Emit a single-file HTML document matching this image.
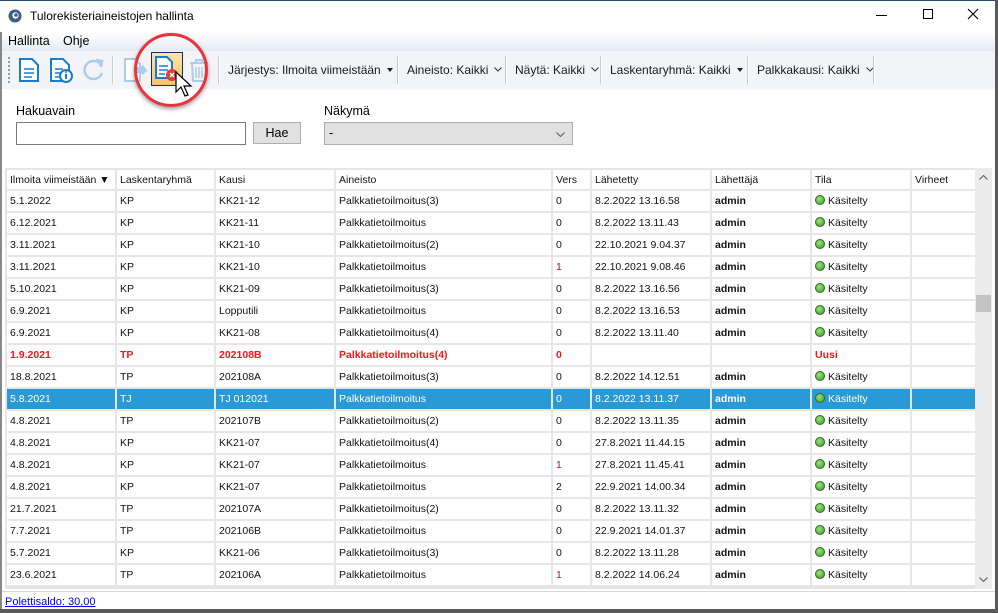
<!DOCTYPE html>
<html><head><meta charset="utf-8"><style>
*{box-sizing:border-box;margin:0;padding:0}
body{width:998px;height:613px;overflow:hidden;background:#fff;font-family:"Liberation Sans",Arial,sans-serif;position:relative}
.abs{position:absolute}
.title{left:0;top:0;width:998px;height:32px;background:#fff;border-top:1px solid #2a4a6a}
.menu{left:0;top:32px;width:995px;height:19px;background:linear-gradient(#fff,#e6eaf3);font-size:12.5px}
.tb{left:0;top:51px;width:995px;height:38px;background:#f3f4f7}
.tbt{font-size:12px;color:#1a1a1a;top:63px;white-space:nowrap}
.sep{width:2px;height:28px;top:56px;background:#c9c9c9;border-right:1px solid #fff}
.chev{display:inline-block;width:8px;height:5px;margin-left:6px;vertical-align:2px}
.tri{display:inline-block;margin-left:6px;width:0;height:0;border-left:3.5px solid transparent;border-right:3.5px solid transparent;border-top:4px solid #222;vertical-align:2px}
table{border-collapse:collapse;font-size:10.5px;position:absolute;left:5px;top:168px;table-layout:fixed;width:970px}
td{height:22px;border:2px solid #e6e6e6;padding:0 3px;white-space:nowrap;overflow:hidden;color:#111}
tr.h td{height:21px;background:#fff}
td.b{font-weight:bold}
tr.red td{color:#f01818;font-weight:bold}
tr.sel td{background:#2a9ad6;color:#fff;border-color:#e6e6e6}
.dot{display:inline-block;width:10px;height:10px;border-radius:50%;background:radial-gradient(circle at 40% 35%,#9be07a,#3a9a20);border:1px solid #2d6e1a;vertical-align:-1px;margin-right:3px}
.v1{color:#a01070}
</style></head><body>
<div class="abs title"></div>
<svg class="abs" style="left:8px;top:9px" width="14" height="14" viewBox="0 0 14 14"><circle cx="7" cy="7" r="6.5" fill="#3b5e86"/><circle cx="7.5" cy="6.5" r="3.2" fill="#fff"/><circle cx="8" cy="6" r="1.8" fill="#3b5e86"/></svg>
<div class="abs" style="left:30px;top:9px;font-size:12px;color:#000">Tulorekisteriaineistojen hallinta</div>
<div class="abs" style="left:876px;top:15px;width:11px;height:1px;background:#000"></div>
<div class="abs" style="left:923px;top:9px;width:10px;height:10px;border:1px solid #000"></div>
<svg class="abs" style="left:967px;top:8px" width="12" height="12"><path d="M1 1L11 11M11 1L1 11" stroke="#000" stroke-width="1.1"/></svg>
<div class="abs menu"><span class="abs" style="left:8px;top:2px">Hallinta</span><span class="abs" style="left:63px;top:2px">Ohje</span></div>
<div class="abs tb"></div>
<div class="abs" style="left:8px;top:57px;width:2px;height:26px;border-left:2px dotted #999"></div>
<svg class="abs" style="left:17px;top:57px" width="24" height="26" viewBox="0 0 24 26"><path d="M3 2h12l6 6v16H3z" fill="#fff" stroke="#1a7bd0" stroke-width="2"/><path d="M7 12h10M7 16h10M7 20h8" stroke="#1a7bd0" stroke-width="1.6"/></svg>
<svg class="abs" style="left:48px;top:57px" width="26" height="26" viewBox="0 0 26 26"><path d="M3 2h12l6 6v16H3z" fill="#fff" stroke="#1a7bd0" stroke-width="2"/><path d="M7 12h8M7 16h6M7 20h5" stroke="#1a7bd0" stroke-width="1.6"/><circle cx="18" cy="19" r="6" fill="#fff" stroke="#1a7bd0" stroke-width="2"/><path d="M18 17v5" stroke="#1a7bd0" stroke-width="2"/><circle cx="18" cy="15" r="1" fill="#1a7bd0"/></svg>
<svg class="abs" style="left:80px;top:57px" width="26" height="26" viewBox="0 0 26 26"><path d="M21 8A9 9 0 1 0 22 16" fill="none" stroke="#a9cdea" stroke-width="2.5"/><path d="M16 3l6 1-1 6" fill="none" stroke="#a9cdea" stroke-width="2.5"/></svg>
<div class="abs sep" style="left:112px"></div>
<svg class="abs" style="left:122px;top:57px" width="28" height="26" viewBox="0 0 28 26"><path d="M3 2h10l5 5v17H3z" fill="#fff" stroke="#a9cdea" stroke-width="2"/><path d="M15 13h8l-3-4M23 13l-3 4" stroke="#a9cdea" stroke-width="3" fill="none"/><rect x="14" y="10" width="7" height="6" fill="#a9cdea"/></svg>
<div class="abs" style="left:151px;top:52px;width:32px;height:34px;background:linear-gradient(#fde4a8,#f6c46a);border:1px solid #1c2a6c"></div>
<svg class="abs" style="left:153px;top:55px" width="28" height="28" viewBox="0 0 28 28"><path d="M3 2h11l5 5v16H3z" fill="#fff" stroke="#1a7bd0" stroke-width="2"/><path d="M6 11h9M6 15h9M6 19h6" stroke="#1a7bd0" stroke-width="1.6"/><circle cx="19" cy="20" r="6" fill="#d94040"/><path d="M17 18l4 4M21 18l-4 4" stroke="#fff" stroke-width="1.5"/></svg>
<svg class="abs" style="left:187px;top:57px" width="24" height="26" viewBox="0 0 24 26"><path d="M3 6h18M9 6V3h6v3M5 6l1 18h12l1-18" fill="none" stroke="#a9cdea" stroke-width="2"/><path d="M9 10v11M12 10v11M15 10v11" stroke="#a9cdea" stroke-width="1.5"/></svg>
<svg class="abs" style="left:174px;top:70px" width="20" height="30" viewBox="0 0 20 30"><path d="M2 2v20l5-5 4 9 3-1-4-9h7z" fill="#fff" stroke="#000" stroke-width="1.2"/></svg>
<div class="abs" style="left:134px;top:33px;width:74px;height:74px;border:3px solid #e8343a;border-radius:50%;box-shadow:0 2px 4px rgba(0,0,0,.4)"></div>
<div class="abs sep" style="left:218px"></div>
<div class="abs tbt" style="left:228px">Järjestys: Ilmoita viimeistään<span class="tri"></span></div>
<div class="abs sep" style="left:397px"></div>
<div class="abs tbt" style="left:407px">Aineisto: Kaikki<svg class="chev" viewBox="0 0 8 5"><path d="M0.5 0.5L4 4L7.5 0.5" fill="none" stroke="#333"/></svg></div>
<div class="abs sep" style="left:505px"></div>
<div class="abs tbt" style="left:515px">Näytä: Kaikki<svg class="chev" viewBox="0 0 8 5"><path d="M0.5 0.5L4 4L7.5 0.5" fill="none" stroke="#333"/></svg></div>
<div class="abs sep" style="left:600px"></div>
<div class="abs tbt" style="left:610px">Laskentaryhmä: Kaikki<span class="tri"></span></div>
<div class="abs sep" style="left:747px"></div>
<div class="abs tbt" style="left:757px">Palkkakausi: Kaikki<svg class="chev" viewBox="0 0 8 5"><path d="M0.5 0.5L4 4L7.5 0.5" fill="none" stroke="#333"/></svg></div>
<div class="abs sep" style="left:873px"></div>
<div class="abs" style="left:16px;top:104px;font-size:12.5px">Hakuavain</div>
<div class="abs" style="left:324px;top:104px;font-size:12.5px">Näkymä</div>
<div class="abs" style="left:16px;top:122px;width:230px;height:23px;border:1px solid #7a7a7a;background:#fff"></div>
<div class="abs" style="left:253px;top:122px;width:48px;height:22px;border:1px solid #adadad;background:#e1e1e1;font-size:12.5px;text-align:center;line-height:20px">Hae</div>
<div class="abs" style="left:324px;top:122px;width:249px;height:23px;border:1px solid #adadad;background:#e1e1e1;font-size:12.5px;padding-left:4px;line-height:21px">-<svg class="abs" style="right:7px;top:9px" width="9" height="5" viewBox="0 0 9 5"><path d="M0.5 0.5L4.5 4.5L8.5 0.5" fill="none" stroke="#555"/></svg></div>
<table>
<colgroup><col style="width:110px"><col style="width:99px"><col style="width:120px"><col style="width:217px"><col style="width:39px"><col style="width:120px"><col style="width:100px"><col style="width:100px"><col style="width:65px"></colgroup>
<tr class="h"><td>Ilmoita viimeistään ▼</td><td>Laskentaryhmä</td><td>Kausi</td><td>Aineisto</td><td>Vers</td><td>Lähetetty</td><td>Lähettäjä</td><td>Tila</td><td>Virheet</td></tr>
<tr><td>5.1.2022</td><td>KP</td><td>KK21-12</td><td>Palkkatietoilmoitus(3)</td><td>0</td><td>8.2.2022 13.16.58</td><td class="b">admin</td><td><span class="dot"></span>Käsitelty</td><td></td></tr>
<tr><td>6.12.2021</td><td>KP</td><td>KK21-11</td><td>Palkkatietoilmoitus</td><td>0</td><td>8.2.2022 13.11.43</td><td class="b">admin</td><td><span class="dot"></span>Käsitelty</td><td></td></tr>
<tr><td>3.11.2021</td><td>KP</td><td>KK21-10</td><td>Palkkatietoilmoitus(2)</td><td>0</td><td>22.10.2021 9.04.37</td><td class="b">admin</td><td><span class="dot"></span>Käsitelty</td><td></td></tr>
<tr><td>3.11.2021</td><td>KP</td><td>KK21-10</td><td>Palkkatietoilmoitus</td><td class="v1">1</td><td>22.10.2021 9.08.46</td><td class="b">admin</td><td><span class="dot"></span>Käsitelty</td><td></td></tr>
<tr><td>5.10.2021</td><td>KP</td><td>KK21-09</td><td>Palkkatietoilmoitus(3)</td><td>0</td><td>8.2.2022 13.16.56</td><td class="b">admin</td><td><span class="dot"></span>Käsitelty</td><td></td></tr>
<tr><td>6.9.2021</td><td>KP</td><td>Lopputili</td><td>Palkkatietoilmoitus</td><td>0</td><td>8.2.2022 13.16.53</td><td class="b">admin</td><td><span class="dot"></span>Käsitelty</td><td></td></tr>
<tr><td>6.9.2021</td><td>KP</td><td>KK21-08</td><td>Palkkatietoilmoitus(4)</td><td>0</td><td>8.2.2022 13.11.40</td><td class="b">admin</td><td><span class="dot"></span>Käsitelty</td><td></td></tr>
<tr class="red"><td>1.9.2021</td><td>TP</td><td>202108B</td><td>Palkkatietoilmoitus(4)</td><td>0</td><td></td><td></td><td>Uusi</td><td></td></tr>
<tr><td>18.8.2021</td><td>TP</td><td>202108A</td><td>Palkkatietoilmoitus(3)</td><td>0</td><td>8.2.2022 14.12.51</td><td class="b">admin</td><td><span class="dot"></span>Käsitelty</td><td></td></tr>
<tr class="sel"><td>5.8.2021</td><td>TJ</td><td>TJ 012021</td><td>Palkkatietoilmoitus</td><td>0</td><td>8.2.2022 13.11.37</td><td class="b">admin</td><td><span class="dot"></span>Käsitelty</td><td></td></tr>
<tr><td>4.8.2021</td><td>TP</td><td>202107B</td><td>Palkkatietoilmoitus(2)</td><td>0</td><td>8.2.2022 13.11.35</td><td class="b">admin</td><td><span class="dot"></span>Käsitelty</td><td></td></tr>
<tr><td>4.8.2021</td><td>KP</td><td>KK21-07</td><td>Palkkatietoilmoitus(4)</td><td>0</td><td>27.8.2021 11.44.15</td><td class="b">admin</td><td><span class="dot"></span>Käsitelty</td><td></td></tr>
<tr><td>4.8.2021</td><td>KP</td><td>KK21-07</td><td>Palkkatietoilmoitus</td><td class="v1">1</td><td>27.8.2021 11.45.41</td><td class="b">admin</td><td><span class="dot"></span>Käsitelty</td><td></td></tr>
<tr><td>4.8.2021</td><td>KP</td><td>KK21-07</td><td>Palkkatietoilmoitus</td><td>2</td><td>22.9.2021 14.00.34</td><td class="b">admin</td><td><span class="dot"></span>Käsitelty</td><td></td></tr>
<tr><td>21.7.2021</td><td>TP</td><td>202107A</td><td>Palkkatietoilmoitus(2)</td><td>0</td><td>8.2.2022 13.11.32</td><td class="b">admin</td><td><span class="dot"></span>Käsitelty</td><td></td></tr>
<tr><td>7.7.2021</td><td>TP</td><td>202106B</td><td>Palkkatietoilmoitus</td><td>0</td><td>22.9.2021 14.01.37</td><td class="b">admin</td><td><span class="dot"></span>Käsitelty</td><td></td></tr>
<tr><td>5.7.2021</td><td>KP</td><td>KK21-06</td><td>Palkkatietoilmoitus(3)</td><td>0</td><td>8.2.2022 13.11.28</td><td class="b">admin</td><td><span class="dot"></span>Käsitelty</td><td></td></tr>
<tr><td>23.6.2021</td><td>TP</td><td>202106A</td><td>Palkkatietoilmoitus</td><td class="v1">1</td><td>8.2.2022 14.06.24</td><td class="b">admin</td><td><span class="dot"></span>Käsitelty</td><td></td></tr>
<tr><td></td><td></td><td></td><td></td><td></td><td></td><td></td><td></td><td></td></tr>
</table>
<div class="abs" style="left:0;top:587px;width:998px;height:26px;background:#fff"></div>
<div class="abs" style="left:5px;top:587px;width:970px;height:2px;background:#e6e6e6"></div>
<div class="abs" style="left:975px;top:168px;width:17px;height:421px;background:#ececec"></div>
<div class="abs" style="left:976px;top:295px;width:15px;height:17px;background:#c2c2c2"></div>
<svg class="abs" style="left:979px;top:175px" width="9" height="5"><path d="M0.5 4.5L4.5 0.5L8.5 4.5" fill="none" stroke="#555"/></svg>
<svg class="abs" style="left:979px;top:577px" width="9" height="5"><path d="M0.5 0.5L4.5 4.5L8.5 0.5" fill="none" stroke="#555"/></svg>
<div class="abs" style="left:0;top:591px;width:995px;height:1px;background:#d8d8d8"></div>
<div class="abs" style="left:5px;top:596px;font-size:11px;color:#0000ee;text-decoration:underline">Polettisaldo: 30,00</div>
<div class="abs" style="left:0;top:32px;width:2px;height:581px;background:#888"></div>
<div class="abs" style="left:995px;top:0;width:3px;height:613px;background:#5a5a5a"></div>
<div class="abs" style="left:0;top:609px;width:998px;height:4px;background:#5a5a5a"></div>
</body></html>
